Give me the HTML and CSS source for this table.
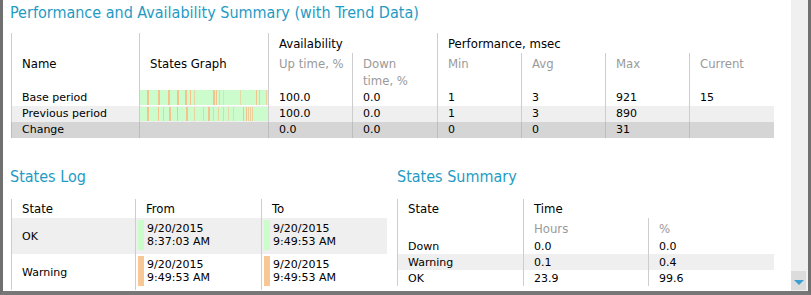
FILE: index.html
```html
<!DOCTYPE html>
<html>
<head>
<meta charset="utf-8">
<link rel="stylesheet" href="styles.css">
</head>
<body>
<div class="window">
  <div class="content">
    <h1 class="title">Performance and Availability Summary (with Trend Data)</h1>
    <table class="grid perf">
      <colgroup>
        <col style="width:128px"><col style="width:129px"><col style="width:84px"><col style="width:85px">
        <col style="width:84px"><col style="width:84px"><col style="width:84px"><col style="width:85px">
      </colgroup>
      <tr class="group-row">
        <th class="hd mid" rowspan="2">Name</th>
        <th class="hd mid" rowspan="2">States Graph</th>
        <th class="hd grp" colspan="2">Availability</th>
        <th class="hd grp" colspan="4">Performance, msec</th>
      </tr>
      <tr class="sub-row">
        <th class="hd sub">Up time, %</th>
        <th class="hd sub">Down<br>time, %</th>
        <th class="hd sub">Min</th>
        <th class="hd sub">Avg</th>
        <th class="hd sub">Max</th>
        <th class="hd sub">Current</th>
      </tr>
      <tr class="data">
        <td>Base period</td>
        <td class="graph">
          <svg class="bar" width="128" height="15" viewBox="0 0 128 15">
            <rect width="128" height="15" fill="#ccfccc"/>
            <g fill="#f3c38e">
              <rect x="7" width="2" height="15"/><rect x="18" width="2" height="15"/><rect x="28" width="2" height="15"/>
              <rect x="37" width="2" height="15"/><rect x="45" width="2" height="15"/><rect x="50" width="1" height="15"/>
              <rect x="54" width="1" height="15" opacity="0.7"/><rect x="73" width="2" height="15"/><rect x="76" width="1" height="15"/>
              <rect x="79" width="1" height="15" opacity="0.7"/><rect x="83" width="1" height="15" opacity="0.5"/>
              <rect x="100" width="1" height="15" opacity="0.6"/><rect x="116" width="1" height="15"/>
              <rect x="119" width="1" height="15" opacity="0.8"/><rect x="126" width="1" height="15" opacity="0.7"/>
            </g>
          </svg>
        </td>
        <td>100.0</td><td>0.0</td><td>1</td><td>3</td><td>921</td><td>15</td>
      </tr>
      <tr class="data alt">
        <td>Previous period</td>
        <td class="graph">
          <svg class="bar bar2" width="128" height="14" viewBox="0 0 128 14">
            <rect width="128" height="14" fill="#ccfccc"/>
            <g fill="#f3c38e">
              <rect x="7" width="2" height="14"/><rect x="18" width="1" height="14"/><rect x="23" width="1" height="14" opacity="0.8"/>
              <rect x="29" width="2" height="14"/><rect x="37" width="1" height="14"/><rect x="46" width="2" height="14"/>
              <rect x="54" width="1" height="14" opacity="0.7"/><rect x="63" width="1" height="14" opacity="0.7"/>
              <rect x="68" width="2" height="14"/><rect x="73" width="1" height="14" opacity="0.7"/>
              <rect x="78" width="1" height="14" opacity="0.7"/><rect x="83" width="1" height="14" opacity="0.7"/>
              <rect x="88" width="1" height="14" opacity="0.6"/><rect x="93" width="1" height="14" opacity="0.6"/>
              <rect x="103" width="1" height="14"/><rect x="106" width="1" height="14"/>
              <rect x="108" width="1" height="14" opacity="0.8"/><rect x="110" width="1" height="14" opacity="0.8"/>
              <rect x="112" width="1" height="14" opacity="0.8"/>
            </g>
          </svg>
        </td>
        <td>100.0</td><td>0.0</td><td>1</td><td>3</td><td>890</td><td></td>
      </tr>
      <tr class="data change">
        <td>Change</td><td></td><td>0.0</td><td>0.0</td><td>0</td><td>0</td><td>31</td><td></td>
      </tr>
    </table>

    <div class="lower">
      <section class="panel panel-log">
        <h2 class="title">States Log</h2>
        <table class="grid log">
          <colgroup><col style="width:124px"><col style="width:126px"><col style="width:126px"></colgroup>
          <tr class="head-row">
            <th class="hd">State</th><th class="hd">From</th><th class="hd">To</th>
          </tr>
          <tr class="log-row alt">
            <td class="state">OK</td>
            <td class="when"><div class="stamp"><span class="mark ok"></span><span>9/20/2015<br>8:37:03 AM</span></div></td>
            <td class="when"><div class="stamp"><span class="mark ok"></span><span>9/20/2015<br>9:49:53 AM</span></div></td>
          </tr>
          <tr class="log-row">
            <td class="state">Warning</td>
            <td class="when"><div class="stamp"><span class="mark warn"></span><span>9/20/2015<br>9:49:53 AM</span></div></td>
            <td class="when"><div class="stamp"><span class="mark warn"></span><span>9/20/2015<br>9:49:53 AM</span></div></td>
          </tr>
        </table>
      </section>
      <section class="panel panel-sum">
        <h2 class="title">States Summary</h2>
        <table class="grid sum">
          <colgroup><col style="width:126px"><col style="width:125px"><col style="width:126px"></colgroup>
          <tr class="head-row">
            <th class="hd" rowspan="2">State</th><th class="hd" colspan="2">Time</th>
          </tr>
          <tr class="sub2-row">
            <th class="hd sub">Hours</th><th class="hd sub">%</th>
          </tr>
          <tr class="data"><td>Down</td><td>0.0</td><td>0.0</td></tr>
          <tr class="data alt"><td>Warning</td><td>0.1</td><td>0.4</td></tr>
          <tr class="data"><td>OK</td><td>23.9</td><td>99.6</td></tr>
        </table>
      </section>
    </div>
  </div>
  <div class="scrollbar">
    <div class="arrow">
      <svg width="10" height="5" viewBox="0 0 10 5"><path d="M0 0H10L5 5Z" fill="#3c9fd2"/></svg>
    </div>
  </div>
</div>
</body>
</html>
```
FILE: styles.css
```css
* { box-sizing: border-box; }
html, body { margin: 0; padding: 0; background: #fff; }
body {
  width: 811px; height: 295px; overflow: hidden;
  font-family: "DejaVu Sans", Verdana, sans-serif;
  font-size: 11px; color: #000;
}
.window {
  display: flex; width: 811px; height: 295px;
  border-left: 3px solid #707070; border-right: 3px solid #707070; border-bottom: 4px solid #777;
  background: #fff;
}
.content { flex: 1; min-width: 0; padding: 3px 0 0 7px; overflow: hidden; }
.title {
  margin: 0; font-weight: normal; font-size: 16px; line-height: 20px;
  font-family: "DejaVu Sans Condensed", "DejaVu Sans", sans-serif; font-stretch: condensed;
  color: #1f9bc4; white-space: nowrap;
}
.grid { border-collapse: separate; border-spacing: 0; table-layout: fixed; margin-left: 1px; }
.grid th, .grid td {
  padding: 0 0 0 10px; border-left: 1px solid #cdcdcd;
  text-align: left; font-weight: normal; white-space: nowrap; vertical-align: top;
}
.hd { font-family: "DejaVu Sans Condensed", "DejaVu Sans", sans-serif; font-stretch: condensed; font-size: 13px; color: #000; }
.hd.sub { color: #9a9a9a; }

.perf { width: 763px; margin-top: 10px; }
.perf .group-row { height: 20px; }
.perf .group-row .grp { vertical-align: bottom; line-height: 18px; }
.perf .mid { vertical-align: middle; padding-top: 3px; }
.perf .sub-row { height: 37px; }
.perf .sub-row th { line-height: 17px; padding-top: 2px; }
.perf .data td { height: 16px; line-height: 16px; }
.perf .graph { padding: 0; }
.bar { display: block; }
.bar2 { margin-top: 1px; }
.alt td { background: #efefef; }
.change td { background: #d5d5d5; border-left-color: #bdbdbd; }

.lower { display: flex; margin-top: 29px; }
.panel { display: flex; flex-direction: column; }
.panel .grid { margin-top: 12px; }
.panel-log { width: 387px; }
.log { width: 376px; }
.head-row th { height: 19px; line-height: 19px; vertical-align: middle; }
.log-row td { height: 36px; }
.log .state { vertical-align: middle; }
.log .when { padding: 2px 0 4px 2px; }
.stamp { display: flex; gap: 3px; height: 30px; align-items: center; line-height: 13px; }
.mark { width: 6px; height: 30px; flex: none; }
.mark.ok { background: #ccfccc; }
.mark.warn { background: #f8c796; }

.sum { width: 377px; margin-left: 0; }
.sum .head-row th[rowspan] { vertical-align: top; }
.sum .sub2-row th { height: 20px; line-height: 19px; vertical-align: middle; padding-top: 1px; }
.sum .data td { height: 16px; line-height: 15px; padding-top: 1px; }

.scrollbar {
  width: 17px; flex: none; background: #f0f0f0;
  display: flex; flex-direction: column; justify-content: flex-end;
}
.arrow {
  height: 19px; margin: 0 2px 1px 0; background: #dcdcdc;
  display: flex; align-items: center; justify-content: center; padding-top: 4px;
}
.arrow svg { display: block; }
```
